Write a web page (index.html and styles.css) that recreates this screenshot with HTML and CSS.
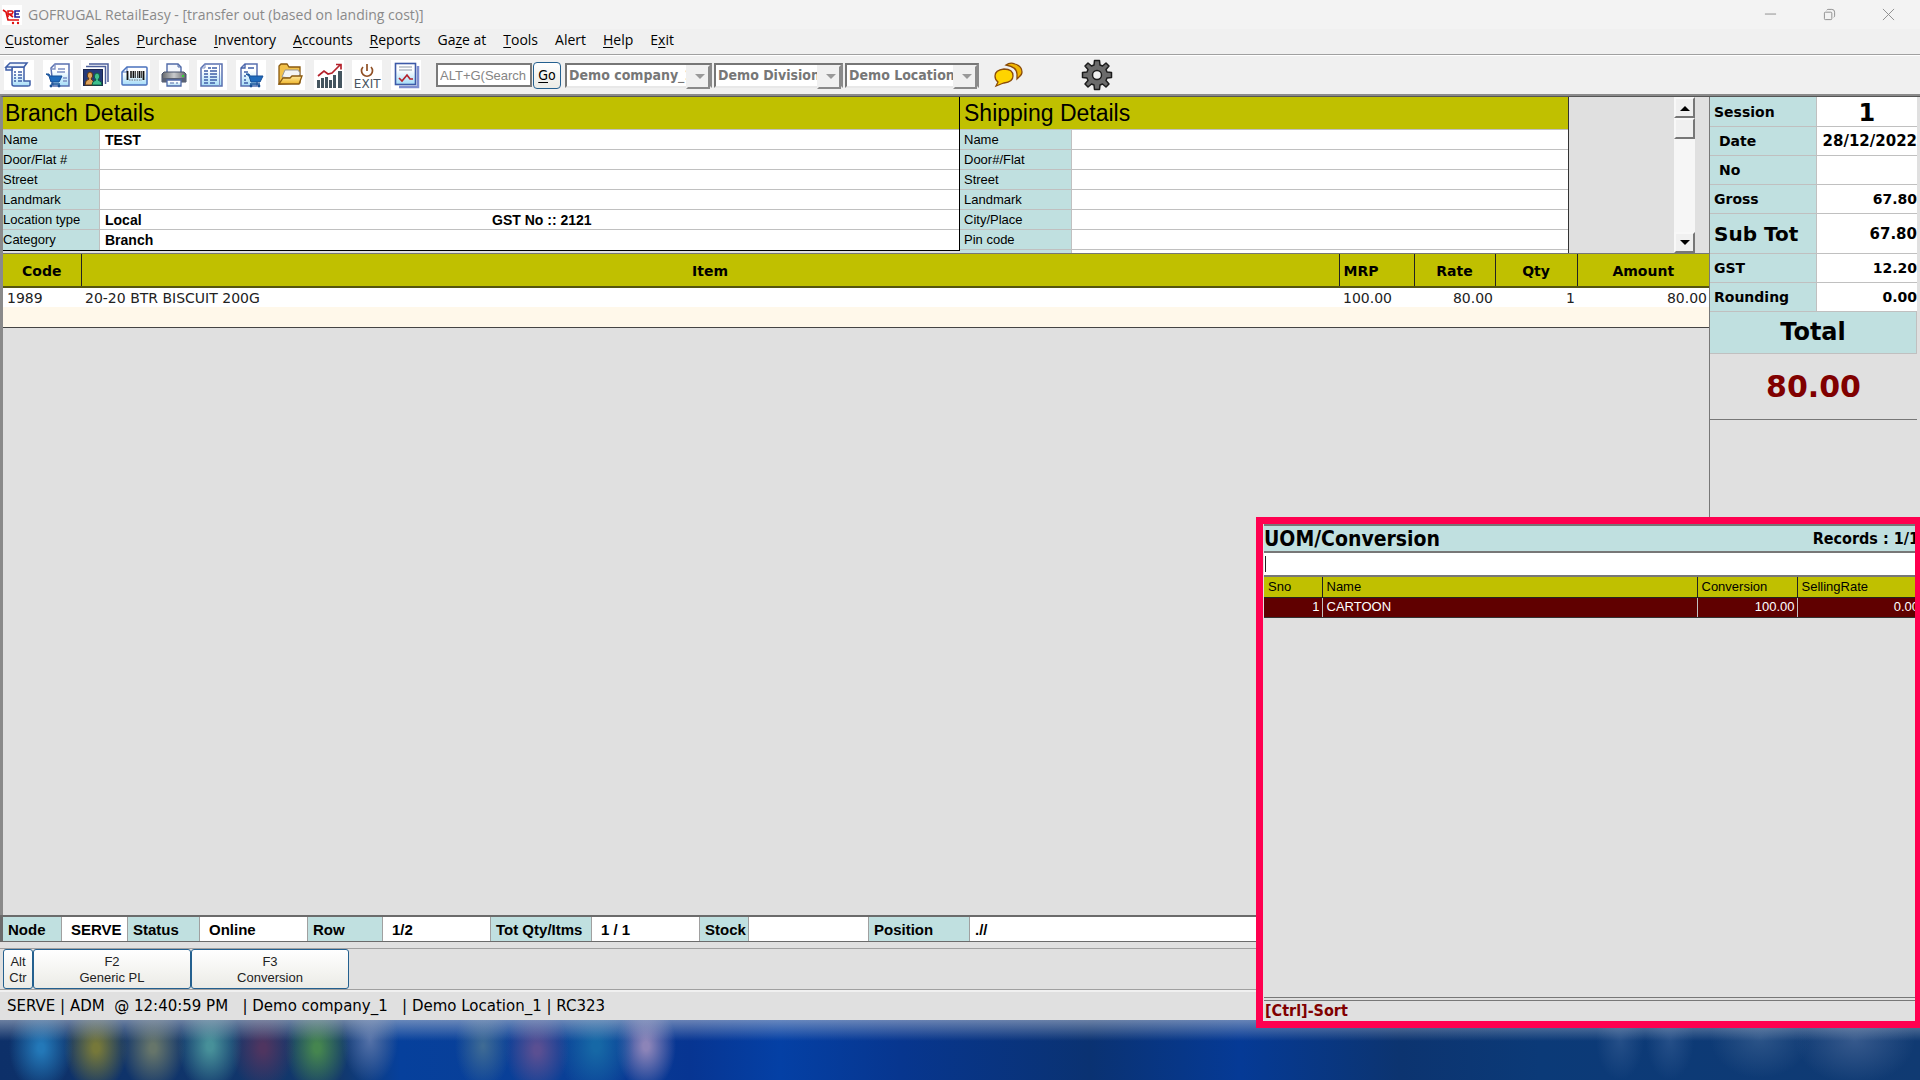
FILE: index.html
```html
<!DOCTYPE html>
<html lang="en">

<head>
  <meta charset="UTF-8">
  <meta name="viewport" content="width=device-width, initial-scale=1.0">
  <title>GOFRUGAL RetailEasy - [transfer out (based on landing cost)]</title>
  <link rel="stylesheet" href="styles.css">
</head>

<body>
  <header class="titlebar">
    <svg class="app-logo" viewBox="0 0 20 20">
      <rect width="20" height="20" fill="#fff" />
      <path d="M1 5l3 2 2 8h11" fill="none" stroke="#e01010" stroke-width="1.6" />
      <path d="M6 12V6h4l1 1-1 2H7l4 3" fill="none" stroke="#e01010" stroke-width="1.6" />
      <path d="M18 6h-5v6h5M13 9h4" fill="none" stroke="#20209a" stroke-width="1.6" />
      <circle cx="11" cy="18" r="1.2" fill="#e01010" />
      <circle cx="16" cy="18" r="1.2" fill="#e01010" />
    </svg>
    <span class="title">GOFRUGAL RetailEasy - [transfer out (based on landing cost)]</span>
    <div class="win-buttons">
      <button type="button" aria-label="Minimize"><svg viewBox="0 0 14 14"><path d="M1 6.500h12" /></svg></button>
      <button type="button" aria-label="Restore"><svg viewBox="0 0 14 14"><rect x="1.500" y="4.500" width="8" height="8" rx="1" /><path d="M4 2.500q.5-1 1.500-1h4q3 0 3 3v4q0 1-1 1.500" /></svg></button>
      <button type="button" aria-label="Close"><svg viewBox="0 0 14 14"><path d="M1 1l12 12M13 1L1 13" /></svg></button>
    </div>
  </header>

  <nav class="menubar">
    <a href="#"><u>C</u>ustomer</a>
    <a href="#"><u>S</u>ales</a>
    <a href="#"><u>P</u>urchase</a>
    <a href="#"><u>I</u>nventory</a>
    <a href="#"><u>A</u>ccounts</a>
    <a href="#"><u>R</u>eports</a>
    <a href="#">Ga<u>z</u>e at</a>
    <a href="#"><u>T</u>ools</a>
    <a href="#">Alert</a>
    <a href="#"><u>H</u>elp</a>
    <a href="#">E<u>x</u>it</a>
  </nav>

  <div class="toolbar">
    <svg class="defs" width="0" height="0">
      <defs>
        <linearGradient id="sheet" x1="0" y1="0" x2="0" y2="1">
          <stop offset="0.300" stop-color="#fff" />
          <stop offset="1" stop-color="#a5dcf8" />
        </linearGradient>
        <linearGradient id="metal" x1="0" y1="0" x2="1" y2="0">
          <stop offset="0" stop-color="#63666a" />
          <stop offset="0.500" stop-color="#c8cacc" />
          <stop offset="1" stop-color="#63666a" />
        </linearGradient>
        <linearGradient id="folder" x1="0" y1="0" x2="0" y2="1">
          <stop offset="0" stop-color="#ffe9a0" />
          <stop offset="1" stop-color="#eeb52a" />
        </linearGradient>
      </defs>
    </svg>
    <div class="icons">
      <button type="button" aria-label="Sales bill"><svg viewBox="0 0 30 30">
        <path d="M8 7h12v14h6v4q0 1-2 1H10q-2 0-2-2z" fill="url(#sheet)" stroke="#3f5fa8" stroke-width="1.500" />
        <path d="M2 7l4-4h17l-3 4zM2 7v3h6V7" fill="#eef4fc" stroke="#3f5fa8" stroke-width="1.500" />
        <path d="M10 12h2M14 12h4M10 15h2M14 15h4M10 18h2M14 18h4M10 21h2M14 21h4" stroke="#3f5fa8" stroke-width="1.300" />
      </svg></button>
      <button type="button" aria-label="Purchase cart"><svg viewBox="0 0 30 30">
        <path d="M8 8l4-4h14v22H10z" fill="url(#sheet)" stroke="#5a70b0" stroke-width="1.500" />
        <path d="M12 4v5H8M15 9h7M14 12h8M20 18h4M20 21h4" fill="none" stroke="#7d90c4" stroke-width="1.300" />
        <path d="M3 14h3l1 2h12l-3 6H8l-2-6z" fill="#1f6bbd" stroke="#174f96" />
        <path d="M8 24h9" stroke="#174f96" stroke-width="1.500" />
        <circle cx="8" cy="26" r="1.400" fill="#174f96" /><circle cx="16" cy="26" r="1.400" fill="#174f96" />
      </svg></button>
      <button type="button" aria-label="Customers"><svg viewBox="0 0 30 30">
        <path d="M8 4h19v18M5 6.500h19.500V24" fill="none" stroke="#4c5f9c" stroke-width="1.500" />
        <rect x="2.500" y="9.500" width="19" height="16" fill="#253a78" stroke="#1b2750" />
        <path d="M4 25q0-5 4-6-3-3-1-6 2-2 4 0 2 3-1 6 3 1 3 6z" fill="#e0a45c" stroke="#5c3712" />
        <path d="M11 25q0-4 4-5-3-3-1-6 2-2 4 0 2 3-1 6 4 1 4 5z" fill="#3fc08f" stroke="#0d5c40" />
      </svg></button>
      <button type="button" aria-label="Barcode"><svg viewBox="0 0 30 30">
        <path d="M2 12l5-5h19q1 0 1 1v16q0 1-1 1H3q-1 0-1-1z" fill="url(#sheet)" stroke="#4a72bd" stroke-width="1.500" />
        <path d="M7 7v5H2" fill="none" stroke="#4a72bd" />
        <path d="M7.500 11v9M13.500 11v7M19.500 11v7M23.500 11v9" stroke="#111" stroke-width="1.800" />
        <path d="M10.500 11v7M11.500 11v7M15.500 11v7M17.500 11v7M21.500 11v7" stroke="#333" stroke-width="0.900" />
        <path d="M9 20h13" stroke="#555" stroke-width="0.800" stroke-dasharray="1.500 1" />
      </svg></button>
      <button type="button" aria-label="Print"><svg viewBox="0 0 30 30">
        <path d="M8 13V4h11l3 3v6z" fill="#f5f8fd" stroke="#506aa8" stroke-width="1.400" />
        <path d="M19 4v3h3" fill="none" stroke="#506aa8" />
        <path d="M5 12h20l2 2v8H3v-8z" fill="url(#metal)" stroke="#45506a" />
        <path d="M3 18h24v4H3z" fill="#596174" />
        <rect x="23" y="15" width="2" height="2" fill="#35d335" />
        <path d="M8 20h14v6H8z" fill="url(#sheet)" stroke="#506aa8" stroke-width="1.300" />
        <path d="M11 23h4M17 23h2" stroke="#506aa8" />
      </svg></button>
      <button type="button" aria-label="Documents"><svg viewBox="0 0 30 30">
        <path d="M4 8l4-4h17v22H4z" fill="url(#sheet)" stroke="#5a70b0" stroke-width="1.500" />
        <path d="M22.500 4v22M8 4v4H4" fill="none" stroke="#7d90c4" />
        <path d="M11 8h3M15 8h5M7 11h4M13 11h7M7 14h4M13 14h7M7 17h4M13 17h7M7 20h4M13 20h7M7 23h4M13 23h5" stroke="#3f5fa8" stroke-width="1.300" />
      </svg></button>
      <button type="button" aria-label="Order"><svg viewBox="0 0 30 30">
        <path d="M5 8l4-4h12v22H5z" fill="url(#sheet)" stroke="#5a70b0" stroke-width="1.500" />
        <path d="M9 4v4H5M12 8h6M8 12h4M8 16h2M8 20h2M8 23h4" fill="none" stroke="#3f5fa8" stroke-width="1.300" />
        <path d="M10 14h3l1 2h13l-3 6H15l-2-6z" fill="#1f6bbd" stroke="#174f96" />
        <path d="M14 24h10" stroke="#174f96" stroke-width="1.500" />
        <circle cx="15" cy="26" r="1.400" fill="#174f96" /><circle cx="23" cy="26" r="1.400" fill="#174f96" />
      </svg></button>
      <button type="button" aria-label="Open"><svg viewBox="0 0 30 30">
        <path d="M4 24V6l2-2h6l2 3h11v16z" fill="#f2c14a" stroke="#8a5a10" stroke-width="1.300" />
        <path d="M7 17l3-7h13l2 3-2 6z" fill="#f4f4f4" stroke="#999" />
        <path d="M4 24l4-6h7l2-2h10l-3 8z" fill="url(#folder)" stroke="#8a5a10" stroke-width="1.300" />
      </svg></button>
      <button type="button" aria-label="Chart"><svg viewBox="0 0 30 30">
        <path d="M3 28v-8h3v8zM7 28v-10h3v10zM11 28V17h3v11zM15 28V20h3v8zM19 28V15h3v13zM24 28V11h4v17z" fill="#44555f" />
        <path d="M4 16l6-5 4 3 4-1 8-8M22 4.500h5v5" fill="none" stroke="#b5222c" stroke-width="1.700" />
      </svg></button>
      <button type="button" class="exit" aria-label="Exit"><svg viewBox="0 0 30 18">
        <path d="M11 6a5.500 5.500 0 1 0 8 0M15 3v7" fill="none" stroke="#8f4f24" stroke-width="1.700" />
      </svg><span>EXIT</span></button>
      <button type="button" aria-label="Report"><svg viewBox="0 0 30 30">
        <path d="M8 27h19V6" fill="none" stroke="#7f8ed0" stroke-width="2.500" />
        <rect x="4.500" y="3.500" width="20" height="21" fill="url(#sheet)" stroke="#3d5aa8" stroke-width="1.600" />
        <path d="M8 7h13M8 10h13" stroke="#8c98a8" stroke-width="1.200" />
        <path d="M8 18l3 3 5-6 3 4h3" fill="none" stroke="#b5222c" stroke-width="1.700" />
      </svg></button>
    </div>

    <div class="search">
      <input type="text" aria-label="Search" placeholder="ALT+G(Search">
      <button type="button"><u>G</u>o</button>
    </div>
    <div class="combos">
      <div class="combo combo-company"><select disabled aria-label="Company"><option>Demo company_1</option></select></div>
      <div class="combo combo-division"><select disabled aria-label="Division"><option>Demo Division_1</option></select></div>
      <div class="combo combo-location"><select disabled aria-label="Location"><option>Demo Location_1</option></select></div>
    </div>
    <button type="button" class="chat" aria-label="Chat"><svg viewBox="0 0 30 26">
      <path d="M13 3q4-3 9-1 7 2 7 8 0 3-3 5l-2 2v-5q0-7-11-9z" fill="#f0b400" stroke="#8a4b08" stroke-width="1.300" />
      <path d="M11 7q9 0 9 7 0 6-9 7l-3 1-5 2 2-4q-3-2-3-6 0-6 9-7z" fill="#ffd400" stroke="#8a4b08" stroke-width="1.300" />
    </svg></button>
    <button type="button" class="gear" aria-label="Settings"><svg viewBox="-16 -16 32 32">
      <path fill="#6b6b6b" stroke="#1c1c1c" stroke-width="1.500" stroke-linejoin="round" fill-rule="evenodd" d="M-3-10L-2.500-14.500H2.500L3-10 5.500-9 9-12 12-9 9-5.500 10-3 14.500-2.500V2.500L10 3 9 5.500 12 9 9 12 5.500 9 3 10 2.500 14.500H-2.500L-3 10-5.500 9-9 12-12 9-9 5.500-10 3-14.500 2.500V-2.500L-10-3-9-5.500-12-9-9-12-5.500-9zM0-4.500A4.500 4.500 0 1 0 0 4.500 4.500 4.500 0 1 0 0-4.500z" />
    </svg></button>
  </div>

  <main class="workspace">
    <section class="entry">
      <div class="details">
        <section class="branch">
          <h2>Branch Details</h2>
          <dl>
            <div><dt>Name</dt><dd>TEST</dd></div>
            <div><dt>Door/Flat #</dt><dd></dd></div>
            <div><dt>Street</dt><dd></dd></div>
            <div><dt>Landmark</dt><dd></dd></div>
            <div><dt>Location type</dt><dd><span class="loc">Local</span><span>GST No :: 2121</span></dd></div>
            <div><dt>Category</dt><dd>Branch</dd></div>
          </dl>
        </section>
        <section class="shipping">
          <h2>Shipping Details</h2>
          <dl>
            <div><dt>Name</dt><dd></dd></div>
            <div><dt>Door#/Flat</dt><dd></dd></div>
            <div><dt>Street</dt><dd></dd></div>
            <div><dt>Landmark</dt><dd></dd></div>
            <div><dt>City/Place</dt><dd></dd></div>
            <div><dt>Pin code</dt><dd></dd></div>
            <div class="more"><dt></dt><dd></dd></div>
          </dl>
        </section>
        <div class="scroll-area">
          <div class="scrollbar">
            <button type="button" aria-label="Scroll up"><svg viewBox="0 0 10 6"><path d="M0 6l5-5 5 5z" /></svg></button>
            <div class="thumb"></div>
            <button type="button" class="down" aria-label="Scroll down"><svg viewBox="0 0 10 6"><path d="M0 0l5 5 5-5z" /></svg></button>
          </div>
        </div>
      </div>

      <table class="items">
        <thead>
          <tr>
            <th class="c-code">Code</th>
            <th>Item</th>
            <th class="c-mrp">MRP</th>
            <th class="c-rate">Rate</th>
            <th class="c-qty">Qty</th>
            <th class="c-amount">Amount</th>
          </tr>
        </thead>
        <tbody>
          <tr>
            <td>1989</td>
            <td>20-20 BTR BISCUIT 200G</td>
            <td>100.00</td>
            <td class="num">80.00</td>
            <td class="num">1</td>
            <td class="num">80.00</td>
          </tr>
          <tr class="blank">
            <td colspan="6"></td>
          </tr>
        </tbody>
      </table>
    </section>

    <aside class="summary">
      <table>
        <tr><th>Session</th><td class="session">1</td></tr>
        <tr><th class="indent">Date</th><td class="date">28/12/2022</td></tr>
        <tr><th class="indent">No</th><td></td></tr>
        <tr><th>Gross</th><td>67.80</td></tr>
        <tr class="subtot"><th>Sub Tot</th><td>67.80</td></tr>
        <tr><th>GST</th><td>12.20</td></tr>
        <tr><th>Rounding</th><td>0.00</td></tr>
      </table>
      <h2>Total</h2>
      <p class="grand">80.00</p>
    </aside>
  </main>

  <div class="infobar">
    <b class="s-node">Node</b><span class="s-server">SERVE</span>
    <b class="s-status">Status</b><span class="s-wide">Online</span>
    <b class="s-row">Row</b><span class="s-wide">1/2</span>
    <b class="s-tot">Tot Qty/Itms</b><span class="s-wide">1 / 1</span>
    <b class="s-stock">Stock</b><span class="s-stockval"></span>
    <b class="s-pos">Position</b><span class="s-rest">.//</span>
  </div>

  <div class="keys">
    <button type="button" class="alt">Alt<br>Ctr</button>
    <button type="button">F2<br>Generic PL</button>
    <button type="button">F3<br>Conversion</button>
  </div>

  <footer class="statusbar">SERVE | ADM&nbsp; @ 12:40:59 PM&nbsp;&nbsp; | Demo company_1&nbsp;&nbsp; | Demo Location_1 | RC323</footer>

  <div class="taskbar"></div>

  <!-- UOM lookup, opened with F3 -->
  <section class="popup">
    <header>
      <h2>UOM/Conversion</h2>
      <span>Records : 1/1</span>
    </header>
    <input type="text" aria-label="Find conversion">
    <table>
      <thead>
        <tr>
          <th class="p-sno">Sno</th>
          <th>Name</th>
          <th class="p-conv">Conversion</th>
          <th class="p-rate">SellingRate</th>
        </tr>
      </thead>
      <tbody>
        <tr>
          <td class="num">1</td>
          <td>CARTOON</td>
          <td class="num">100.00</td>
          <td class="num">0.00</td>
        </tr>
      </tbody>
    </table>
    <footer>[Ctrl]-Sort</footer>
  </section>
</body>

</html>
```
FILE: styles.css
```css
* {
  box-sizing: border-box;
}

body {
  margin: 0;
  position: relative;
  display: flex;
  flex-direction: column;
  min-height: 100vh;
  overflow: hidden;
  background: #e0e0e0;
  color: #000;
  font-family: "DejaVu Sans", sans-serif;
  font-size: 14px;
}

h2,
p,
dl,
dd {
  margin: 0;
}

u {
  text-decoration-thickness: 1px;
  text-underline-offset: 2px;
}

button {
  padding: 0;
  border: 0;
  background: none;
  color: inherit;
}

svg {
  display: block;
}

table {
  width: 100%;
  border-collapse: collapse;
  table-layout: fixed;
}

.num {
  text-align: right;
}

/* title and menu */
.titlebar {
  display: flex;
  align-items: center;
  height: 29px;
  padding-left: 2px;
  background: #f3f3f3;
  color: #8a8a8a;
  font: 14px "Open Sans", sans-serif;
}

.app-logo {
  width: 20px;
  height: 20px;
}

.title {
  margin-left: 6px;
}

.win-buttons {
  display: flex;
  gap: 46px;
  margin-left: auto;
  padding-right: 25px;
}

.win-buttons svg {
  width: 13px;
  height: 13px;
  fill: none;
  stroke: #8a8a8a;
}

.menubar {
  display: flex;
  gap: 17px;
  height: 26px;
  padding-left: 5px;
  background: #f0f0f0;
  border-bottom: 1px solid #a0a0a0;
  font: 14px/22px "Open Sans", sans-serif;
}

.menubar a {
  color: #000;
  text-decoration: none;
}

/* toolbar */
.toolbar {
  display: flex;
  align-items: center;
  height: 41px;
  padding-left: 4px;
  background: #f0f0f0;
  border-top: 1px solid #fff;
  border-bottom: 2px solid #8a8a8a;
}

.defs {
  position: absolute;
}

.icons {
  display: flex;
  justify-content: space-between;
  width: 417px;
}

.icons button {
  width: 30px;
  height: 30px;
  background: #fff;
}

.icons .exit {
  color: #4a5560;
  font: 12px/11px "DejaVu Sans", sans-serif;
}

.exit svg {
  width: 30px;
  height: 18px;
}

.exit span {
  display: block;
}

.search {
  display: flex;
  align-items: center;
  gap: 1px;
  margin-left: 15px;
}

.search input {
  width: 96px;
  height: 24px;
  padding: 0 2px;
  border: 2px solid #7a7a7a;
  background: #fff;
  font: 13px "Liberation Sans", sans-serif;
}

.search input::placeholder {
  color: #858585;
}

.search button {
  width: 28px;
  height: 27px;
  border: 1px solid #24608f;
  border-radius: 4px;
  background: linear-gradient(#fff, #ebebe6);
  font: 14px "DejaVu Sans Condensed", sans-serif;
}

.combos {
  display: flex;
  gap: 2px;
  margin-left: 4px;
}

.combo {
  position: relative;
}

.combo-company {
  width: 147px;
}

.combo-division {
  width: 129px;
}

.combo-location {
  width: 134px;
}

.combo select {
  appearance: none;
  width: 100%;
  height: 25px;
  padding: 0 18px 0 2px;
  border: 2px solid;
  border-color: #767676 #8a8a8a #e8e8e8 #767676;
  border-radius: 0;
  background: #fff;
  color: #777;
  opacity: 1;
  font: bold 14px "DejaVu Sans Condensed", sans-serif;
}

/* drop-down button over the select's right end */
.combo::before {
  content: "";
  position: absolute;
  top: 2px;
  right: 2px;
  width: 20px;
  height: 20px;
  background: #f0f0f0;
  border: 2px solid;
  border-color: #f0f0f0 #8a8a8a #8a8a8a #f0f0f0;
}

.combo::after {
  content: "";
  position: absolute;
  top: 11px;
  right: 7px;
  border: 5px solid transparent;
  border-top-color: #999;
  border-bottom: 0;
}

.chat {
  width: 30px;
  margin-left: 14px;
}

.gear {
  width: 32px;
  margin-left: 58px;
}

/* workspace */
.workspace {
  flex: 1;
  display: flex;
  padding-right: 3px;
  border-top: 1px solid #555;
  border-left: 3px solid #8a8a8a;
}

.entry {
  flex: 1;
  min-width: 0;
}

.details {
  display: flex;
  border-bottom: 1px solid #777;
}

.details h2 {
  height: 33px;
  padding-left: 2px;
  border-bottom: 1px solid #c0c0c0;
  background: #c0c000;
  font: 23px/33px "Liberation Sans", sans-serif;
}

.branch {
  flex: 956;
  margin-bottom: 2px;
  border-right: 1px solid #000;
  border-bottom: 1px solid #000;
}

.shipping {
  flex: 608;
  border-right: 1px solid #333;
}

.shipping h2,
.shipping dt {
  padding-left: 4px;
}

.details dl div {
  display: flex;
  height: 20px;
  border-bottom: 1px solid #c0c0c0;
  font: 13px/20px "Liberation Sans", sans-serif;
}

.branch dl div:last-child {
  border-bottom: 0;
}

.details dl .more {
  height: 3px;
  border-bottom: 0;
}

.details dt {
  width: 97px;
  border-right: 1px solid #c0c0c0;
  background: #c0e0e0;
}

.shipping dt {
  width: 112px;
}

.details dd {
  flex: 1;
  display: flex;
  padding-left: 5px;
  background: #fff;
  font-size: 14px;
  font-weight: bold;
}

.loc {
  width: 387px;
}

.scroll-area {
  flex: 126;
  display: flex;
  justify-content: flex-end;
  padding-right: 14px;
}

.scrollbar {
  display: flex;
  flex-direction: column;
  width: 21px;
  background: #f6f6f6;
}

.scrollbar button,
.thumb {
  display: flex;
  align-items: center;
  justify-content: center;
  height: 21px;
  background: #f0f0f0;
  border: 2px solid;
  border-color: #f8f8f8 #777 #777 #f8f8f8;
}

.scrollbar svg {
  width: 10px;
  height: 6px;
}

.scrollbar .down {
  margin-top: auto;
}

.items th {
  height: 33px;
  padding: 2px 0 0;
  background: #c0c000;
  border-right: 1px solid #222;
  border-bottom: 2px solid #55550f;
}

.items th:last-child {
  border-right: 0;
}

.c-code {
  width: 78px;
}

.c-mrp {
  width: 75px;
}

.items .c-mrp {
  padding-left: 4px;
  text-align: left;
}

.c-rate {
  width: 81px;
}

.c-qty {
  width: 82px;
}

.c-amount {
  width: 132px;
}

.items td {
  height: 20px;
  padding: 0 2px 0 4px;
  background: #fff;
  color: #222;
  line-height: 18px;
}

.items .blank td {
  background: #fff8ea;
  border-bottom: 1px solid #444;
}

/* bill summary */
.summary {
  width: 208px;
  border-left: 1px solid #777;
}

.summary th,
.summary td {
  height: 29px;
  padding: 1px 0 0;
  border-bottom: 1px solid #c0c0c0;
  font-weight: bold;
  text-align: right;
}

.summary th {
  width: 106px;
  padding-left: 4px;
  border-right: 1px solid #c0c0c0;
  background: #c0e0e0;
  text-align: left;
}

.summary .indent {
  padding-left: 9px;
}

.summary td {
  background: #fff;
}

.summary .session {
  padding-top: 4px;
  font-size: 24px;
  line-height: 24px;
  text-align: center;
}

.summary .date {
  font-size: 15px;
}

.summary .subtot th,
.summary .subtot td {
  height: 40px;
}

.summary .subtot th {
  font-size: 20px;
}

.summary .subtot td {
  font-size: 15px;
}

.summary h2 {
  border: 1px solid #c0c0c0;
  border-width: 0 1px 1px 0;
  background: #c0e0e0;
  font-size: 24px;
  line-height: 41px;
  text-align: center;
}

.grand {
  border-bottom: 1px solid #777;
  color: #800000;
  font-size: 30px;
  font-weight: bold;
  line-height: 65px;
  text-align: center;
}

/* bottom bars */
.infobar {
  display: flex;
  height: 27px;
  border: solid #6b6b6b;
  border-width: 2px 0 1px 3px;
  background: #fff;
  font: bold 15px/25px "Liberation Sans", sans-serif;
}

.infobar b,
.infobar span {
  padding-left: 5px;
  border-right: 1px solid #a0a0a0;
  white-space: nowrap;
}

.infobar b {
  background: #c0e0e0;
}

.infobar span {
  padding-left: 9px;
}

.infobar .s-node {
  width: 59px;
}

.infobar .s-server {
  width: 66px;
}

.infobar .s-status {
  width: 72px;
}

.infobar .s-row {
  width: 75px;
}

.infobar .s-wide {
  width: 108px;
}

.infobar .s-tot {
  width: 101px;
}

.infobar .s-stock {
  width: 49px;
}

.infobar .s-stockval {
  width: 120px;
}

.infobar .s-pos {
  width: 101px;
}

.infobar .s-rest {
  flex: 1;
  padding-left: 5px;
}

.keys {
  display: flex;
  height: 42px;
  margin-top: 6px;
  padding-left: 3px;
  border-top: 1px solid #a0a0a0;
  border-bottom: 1px solid #a0a0a0;
}

.keys button {
  width: 158px;
  padding-top: 2px;
  border: 1px solid #24608f;
  border-radius: 3px;
  background: linear-gradient(#fff, #ebebe6);
  color: #222;
  font: 13px/16px "Liberation Sans", sans-serif;
}

.keys .alt {
  width: 30px;
}

.statusbar {
  padding-left: 7px;
  border-top: 2px solid #f0f0f0;
  font-size: 15px;
  line-height: 28px;
}

.taskbar {
  height: 60px;
  background:
    linear-gradient(rgba(200, 205, 215, 0.5), transparent 35%),
    radial-gradient(ellipse 32px 44px at 41px 28px, #2378b8 10%, transparent),
    radial-gradient(ellipse 32px 44px at 96px 28px, #76783a 10%, transparent),
    radial-gradient(ellipse 32px 44px at 153px 28px, #66756a 10%, transparent),
    radial-gradient(ellipse 32px 46px at 210px 26px, #479099 10%, transparent),
    radial-gradient(ellipse 32px 44px at 263px 28px, #4f3560 10%, transparent),
    radial-gradient(ellipse 32px 46px at 317px 28px, #45854f 10%, transparent),
    radial-gradient(ellipse 28px 44px at 370px 20px, #5572a8, transparent),
    radial-gradient(ellipse 28px 44px at 483px 26px, #406c94, transparent),
    radial-gradient(ellipse 32px 44px at 537px 30px, #5a4f92 10%, transparent),
    radial-gradient(ellipse 38px 54px at 596px 26px, #1668a6 10%, transparent),
    radial-gradient(ellipse 30px 44px at 646px 26px, #8c84b8 10%, transparent),
    radial-gradient(ellipse 24px 40px at 1620px 20px, #254f88, transparent),
    radial-gradient(ellipse 24px 40px at 1670px 20px, #254f88, transparent),
    radial-gradient(ellipse 50px 40px at 1760px 18px, #2c5488, transparent),
    radial-gradient(ellipse 60px 44px at 1855px 20px, #36598c, transparent),
    linear-gradient(90deg, #0d3069, #12386c 340px, #06409c 400px, #0a3f96 560px, #073592 690px, #0440a5 780px, #07368f 900px, #0a3272 1090px, #053a96 1240px, #0c3470 1400px, #0b3a78 1540px, #103a72);
}

/* lookup popup */
.popup {
  position: absolute;
  right: 0;
  bottom: 52px;
  display: flex;
  flex-direction: column;
  width: 664px;
  height: 511px;
  padding-left: 1px;
  border: solid #ff0050;
  border-width: 7px 5px 7px 7px;
  background: #e0e0e0;
  overflow: hidden;
}

/* header and table run on a little under the frame's right edge */
.popup header,
.popup table {
  width: calc(100% + 4px);
}

.popup header {
  display: flex;
  align-items: center;
  justify-content: space-between;
  height: 29px;
  border-top: 2px solid #777;
  border-bottom: 2px solid #777;
  background: #c0e0e0;
  font-family: "DejaVu Sans Condensed", sans-serif;
}

.popup h2 {
  font-size: 21px;
}

.popup header span {
  font-size: 16px;
  font-weight: bold;
}

/* the bar at the left is the text cursor */
.popup input {
  height: 24px;
  padding: 0 4px;
  border: 0;
  border-bottom: 2px solid #777;
  outline: 0;
  background: linear-gradient(#222, #222) 1px 3px / 1px 16px no-repeat #fff;
}

.popup table {
  font: 13px/18px "Liberation Sans", sans-serif;
}

.popup th {
  height: 20px;
  padding: 0 4px;
  border-right: 1px solid #222;
  border-bottom: 1px solid #222;
  background: #c0c000;
  font-weight: normal;
  text-align: left;
}

.popup td {
  height: 20px;
  padding: 0 2px 0 4px;
  border-right: 1px solid #c0c0c0;
  border-bottom: 1px solid #333;
  background: #600000;
  color: #fff;
}

.popup th:last-child,
.popup td:last-child {
  padding-right: 0;
  border-right: 0;
}

.p-sno {
  width: 58px;
}

.p-conv {
  width: 100px;
}

.p-rate {
  width: 122px;
}

.popup footer {
  margin-top: auto;
  padding-left: 1px;
  border-top: 4px double #777;
  color: #800000;
  font: bold 16px/20px "DejaVu Sans Condensed", sans-serif;
}
```
